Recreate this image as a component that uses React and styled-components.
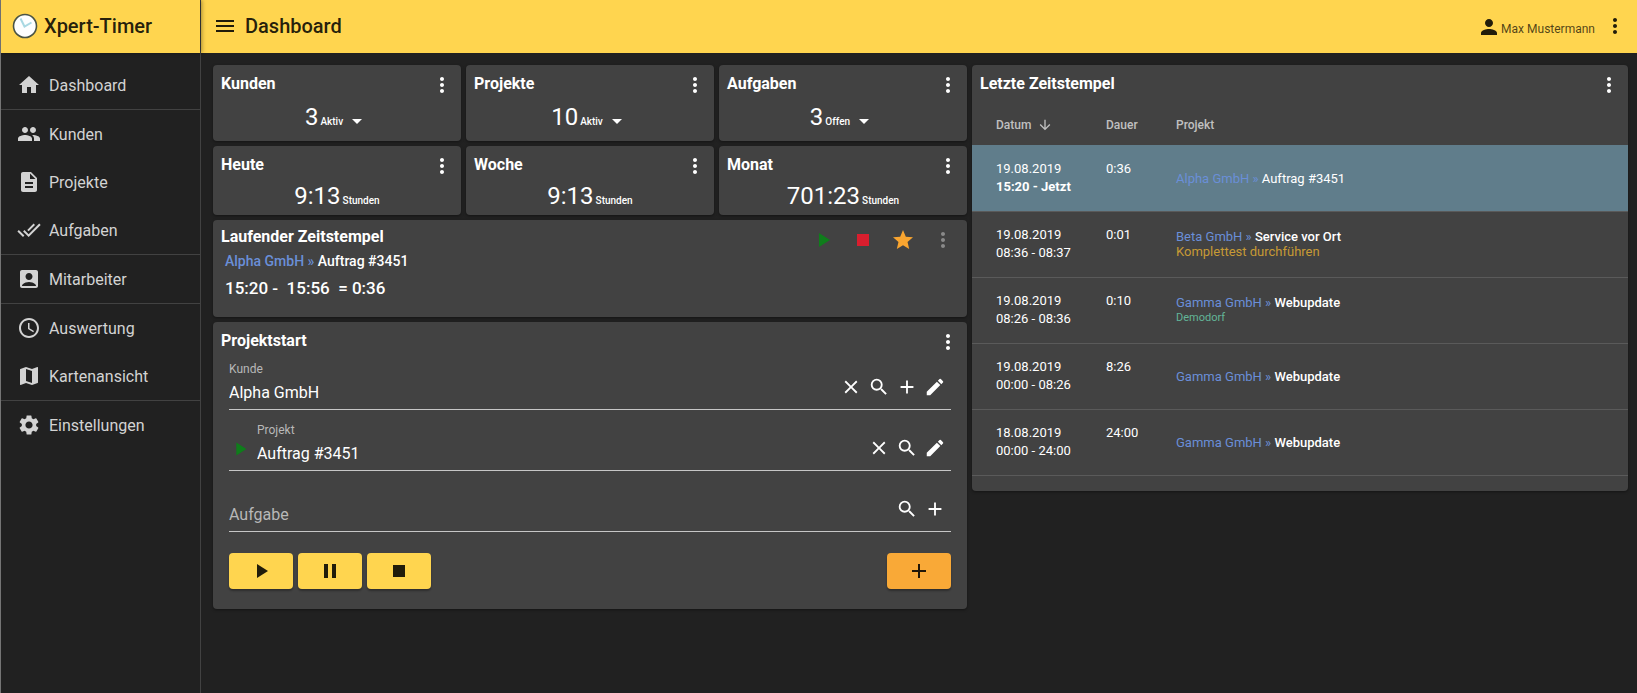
import React from 'react';
import styled, { createGlobalStyle } from 'styled-components';
import {
    MdHome,
    MdPeople,
    MdDescription,
    MdDoneAll,
    MdAccountBox,
    MdAccessTime,
    MdMap,
    MdSettings,
    MdMenu,
    MdPerson,
    MdMoreVert,
    MdArrowDropDown,
    MdArrowDownward,
    MdPlayArrow,
    MdPause,
    MdStop,
    MdStar,
    MdClose,
    MdSearch,
    MdAdd,
    MdEdit,
} from 'react-icons/md';

const GlobalStyle = createGlobalStyle`
    * {
        box-sizing: border-box;
    }
    body {
        margin: 0;
        background: #212121;
        color: white;
        font-family: Roboto, sans-serif;
        font-size: 13px;
    }
    button, input {
        font-family: inherit;
    }
    svg {
        display: block;
        flex-shrink: 0;
    }
`;

const Page = styled.div`
    display: grid;
    grid-template-columns: 201px minmax(0, 1fr);
    min-height: 100vh;
`;

/* Sidebar */

const Sidebar = styled.aside`
    border-left: 1px solid #757575;
    border-right: 1px solid #424242;
    z-index: 1;
`;

const Brand = styled.div`
    height: 53px;
    display: flex;
    align-items: center;
    gap: 6px;
    padding: 0 0 1px 11px;
    background: #ffd54f;
    color: rgba(0, 0, 0, 0.87);
    font-size: 20px;
    font-weight: 500;
    box-shadow: 2px 0 4px rgba(0, 0, 0, 0.35);
`;

const Nav = styled.nav`
    padding-top: 8px;
`;

const NavGroup = styled.div`
    & + & {
        border-top: 1px solid #424242;
    }
`;

const NavItem = styled.a`
    display: flex;
    align-items: center;
    gap: 8px;
    height: 48px;
    padding-left: 16px;
    color: #d3d3d3;
    font-size: 16px;
    text-decoration: none;
`;

/* Top bar */

const Toolbar = styled.header`
    height: 53px;
    display: flex;
    align-items: center;
    gap: 8px;
    padding: 0 10px 1px 12px;
    background: #ffd54f;
    color: rgba(0, 0, 0, 0.87);
`;

const PageTitle = styled.h1`
    flex: 1;
    margin: 0;
    font-size: 20px;
    font-weight: 500;
`;

const User = styled.span`
    display: flex;
    align-items: center;
    padding-top: 2px;
    font-size: 12px;

    span {
        padding-top: 4px;
        opacity: 0.8;
    }
`;

const IconButton = styled.button`
    display: flex;
    align-items: center;
    justify-content: center;
    width: ${(props) => props.$size || 24}px;
    height: 24px;
    padding: 0;
    border: none;
    background: none;
    color: ${(props) => props.$color || 'inherit'};
    cursor: pointer;
`;

/* Cards */

const Main = styled.main`
    display: grid;
    grid-template-columns: minmax(0, 754fr) minmax(0, 656fr);
    align-items: start;
    gap: 5px;
    padding: 12px 9px 12px 12px;
`;

const Column = styled.div`
    display: flex;
    flex-direction: column;
    gap: 5px;
`;

const StatGrid = styled.div`
    display: grid;
    grid-template-columns: repeat(3, minmax(0, 1fr));
    gap: 5px;
`;

const Card = styled.section`
    background: #424242;
    border-radius: 4px;
    box-shadow: 0 1px 3px rgba(0, 0, 0, 0.4);
`;

const CardHead = styled.div`
    display: flex;
    align-items: flex-start;
    justify-content: space-between;
    padding: 8px 7px 0 8px;
`;

const CardTitle = styled.h2`
    margin: 0;
    font-size: 16px;
    line-height: 22px;
    font-weight: 700;
`;

const StatCard = styled(Card)`
    padding-bottom: ${(props) => (props.$tall ? 8 : 3)}px;
`;

const Stat = styled.div`
    display: flex;
    align-items: baseline;
    justify-content: center;
    gap: 2px;
    height: 30px;
    margin-top: ${(props) => (props.$tall ? 6 : 4)}px;
    font-size: 24px;
    line-height: 28px;
`;

const Unit = styled.span`
    font-size: 10px;
    font-weight: 500;
`;

const Dropdown = styled(IconButton)`
    align-self: center;
    margin-top: 6px;
`;

const RunningCard = styled(Card)`
    min-height: 97px;
    padding: 6px 12px 12px 8px;
    display: flex;
    align-items: flex-start;
    justify-content: space-between;
`;

const RunningInfo = styled.div`
    p {
        margin: 3px 0 0 4px;
        font-size: 14px;
        line-height: 20px;
        font-weight: 500;
    }
    p + p {
        margin-top: 7px;
        font-size: 17px;
        white-space: pre;
    }
`;

const RunningActions = styled.div`
    display: flex;
    gap: 16px;
    padding-top: 2px;
`;

const Customer = styled.span`
    color: #6a8fd8;
`;

/* Project form */

const Form = styled.form`
    padding: 0 16px 20px;
`;

const Field = styled.div`
    display: flex;
    align-items: center;
    height: 61px;
    border-bottom: 1px solid #c6c6c6;

    &:first-child {
        height: 56px;
    }
`;

const FieldText = styled.div`
    flex: 1;
    align-self: flex-end;
    display: flex;
    flex-direction: column;
    padding-bottom: 7px;
    gap: 5px;
`;

const Label = styled.label`
    font-size: 12px;
    line-height: 16px;
    color: #b8b8b8;
`;

const Input = styled.input`
    width: 100%;
    height: 20px;
    padding: 0;
    border: none;
    outline: none;
    background: none;
    color: white;
    font-size: 16px;

    &::placeholder {
        color: #b8b8b8;
        opacity: 1;
    }
`;

const FieldPrefix = styled.span`
    align-self: flex-end;
    padding: 0 6px 10px 0;
    color: #0f7d1b;
`;

const FieldActions = styled.div`
    align-self: flex-end;
    display: flex;
    padding: 0 2px 10px 0;
`;

const FormButtons = styled.div`
    display: flex;
    gap: 5px;
    padding-top: 21px;
`;

const ActionButton = styled.button`
    display: flex;
    align-items: center;
    justify-content: center;
    width: 64px;
    height: 36px;
    padding: 0;
    border: none;
    border-radius: 4px;
    background: ${(props) => (props.$accent ? '#f9a937' : '#ffd54f')};
    color: rgba(0, 0, 0, 0.87);
    box-shadow: 0 2px 2px rgba(0, 0, 0, 0.3);
    margin-left: ${(props) => (props.$accent ? 'auto' : '0')};
    cursor: pointer;
`;

/* Timestamp table */

const TableCard = styled(Card)`
    padding-bottom: 15px;
`;

const Table = styled.table`
    width: 100%;
    border-collapse: collapse;
    table-layout: fixed;
    margin-top: 8px;

    th {
        height: 40px;
        padding: 0;
        text-align: left;
        font-size: 12px;
        font-weight: 500;
        color: #c0c0c0;
    }
    td {
        height: 66px;
        padding: 0;
        line-height: 18px;
    }
    th:first-child, td:first-child {
        width: 134px;
        padding-left: 24px;
    }
    th:nth-child(2), td:nth-child(2) {
        width: 70px;
    }
`;

const Row = styled.tr`
    background: ${(props) => (props.$active ? '#607d8b' : 'transparent')};
    border-top: 1px solid ${(props) => (props.$active ? '#607d8b' : '#5a5a5a')};
    border-bottom: 1px solid #5a5a5a;
`;

const SortLabel = styled.span`
    display: flex;
    align-items: center;
    gap: 6px;
`;

const Duration = styled.div`
    display: flex;
    gap: 7px;
    height: 36px;
`;

const Project = styled.div`
    line-height: 15px;
    font-weight: ${(props) => (props.$active ? 400 : 500)};

    ${Customer} {
        font-weight: 400;
    }
`;

const Task = styled.div`
    color: #c79a35;
    font-weight: 400;
`;

const Place = styled.div`
    color: #63b598;
    font-size: 11px;
    font-weight: 400;
`;

const navGroups = [
    [{ label: 'Dashboard', icon: MdHome }],
    [
        { label: 'Kunden', icon: MdPeople },
        { label: 'Projekte', icon: MdDescription },
        { label: 'Aufgaben', icon: MdDoneAll },
    ],
    [{ label: 'Mitarbeiter', icon: MdAccountBox }],
    [
        { label: 'Auswertung', icon: MdAccessTime },
        { label: 'Kartenansicht', icon: MdMap },
    ],
    [{ label: 'Einstellungen', icon: MdSettings }],
];

const counts = [
    { title: 'Kunden', value: '3', unit: 'Aktiv' },
    { title: 'Projekte', value: '10', unit: 'Aktiv' },
    { title: 'Aufgaben', value: '3', unit: 'Offen' },
];

const hours = [
    { title: 'Heute', value: '9:13' },
    { title: 'Woche', value: '9:13' },
    { title: 'Monat', value: '701:23' },
];

const timestamps = [
    { date: '19.08.2019', time: '15:20 - Jetzt', duration: '0:36', customer: 'Alpha GmbH', project: 'Auftrag #3451', active: true },
    { date: '19.08.2019', time: '08:36 - 08:37', duration: '0:01', customer: 'Beta GmbH', project: 'Service vor Ort', task: 'Komplettest durchführen' },
    { date: '19.08.2019', time: '08:26 - 08:36', duration: '0:10', customer: 'Gamma GmbH', project: 'Webupdate', place: 'Demodorf' },
    { date: '19.08.2019', time: '00:00 - 08:26', duration: '8:26', customer: 'Gamma GmbH', project: 'Webupdate' },
    { date: '18.08.2019', time: '00:00 - 24:00', duration: '24:00', customer: 'Gamma GmbH', project: 'Webupdate' },
];

const ClockLogo = () => (
    <svg width="26" height="26" viewBox="0 0 26 26">
        <circle cx="13" cy="13" r="11.5" fill="#fdfefe" stroke="#4a5445" strokeWidth="1.6" />
        <path d="M8.5 5.5 12.5 13.5l7-4" fill="none" stroke="#a9d8e2" strokeWidth="2" />
    </svg>
);

const SignalIcon = () => (
    <svg width="16" height="18" viewBox="0 0 16 18">
        <path
            d="M3.5 4.5q-3 4.500 9M12.500 4.500q3 4.500 0 9M5.500 12V6l5 6V6"
            fill="none"
            stroke="#74747c"
            strokeOpacity="0.75"
        />
    </svg>
);

const CardHeader = ({ title }) => (
    <CardHead>
        <CardTitle>{title}</CardTitle>
        <IconButton type="button" aria-label={`${title} Menü`}>
            <MdMoreVert size={24} />
        </IconButton>
    </CardHead>
);

const App = () => {
    return (
        <>
            <GlobalStyle />
            <Page>
                <Sidebar>
                    <Brand>
                        <ClockLogo />
                        Xpert-Timer
                    </Brand>
                    <Nav>
                        {navGroups.map((group) => (
                            <NavGroup key={group[0].label}>
                                {group.map(({ label, icon: Icon }) => (
                                    <NavItem href="#" key={label}>
                                        <Icon size={24} />
                                        {label}
                                    </NavItem>
                                ))}
                            </NavGroup>
                        ))}
                    </Nav>
                </Sidebar>
                <div>
                    <Toolbar>
                        <IconButton type="button" aria-label="Navigation">
                            <MdMenu size={24} />
                        </IconButton>
                        <PageTitle>Dashboard</PageTitle>
                        <User>
                            <MdPerson size={24} />
                            <span>Max Mustermann</span>
                        </User>
                        <IconButton type="button" aria-label="Mehr">
                            <MdMoreVert size={24} />
                        </IconButton>
                    </Toolbar>
                    <Main>
                        <Column>
                            <StatGrid>
                                {counts.map((item) => (
                                    <StatCard key={item.title} $tall>
                                        <CardHeader title={item.title} />
                                        <Stat $tall>
                                            {item.value}
                                            <Unit>{item.unit}</Unit>
                                            <Dropdown type="button" aria-label={`${item.title} Filter`}>
                                                <MdArrowDropDown size={24} />
                                            </Dropdown>
                                        </Stat>
                                    </StatCard>
                                ))}
                                {hours.map((item) => (
                                    <StatCard key={item.title}>
                                        <CardHeader title={item.title} />
                                        <Stat>
                                            {item.value}
                                            <Unit>Stunden</Unit>
                                        </Stat>
                                    </StatCard>
                                ))}
                            </StatGrid>
                            <RunningCard>
                                <RunningInfo>
                                    <CardTitle>Laufender Zeitstempel</CardTitle>
                                    <p>
                                        <Customer>Alpha GmbH »</Customer> Auftrag #3451
                                    </p>
                                    <p>{'15:20 -  15:56  = 0:36'}</p>
                                </RunningInfo>
                                <RunningActions>
                                    <IconButton type="button" aria-label="Start" $color="#0f7d1b">
                                        <MdPlayArrow size={24} />
                                    </IconButton>
                                    <IconButton type="button" aria-label="Stopp" $color="#d91e2e">
                                        <MdStop size={24} />
                                    </IconButton>
                                    <IconButton type="button" aria-label="Favorit" $color="#f9a530">
                                        <MdStar size={24} />
                                    </IconButton>
                                    <IconButton type="button" aria-label="Mehr" $color="#8a8a8a">
                                        <MdMoreVert size={24} />
                                    </IconButton>
                                </RunningActions>
                            </RunningCard>
                            <Card>
                                <CardHeader title="Projektstart" />
                                <Form>
                                    <Field>
                                        <FieldText>
                                            <Label htmlFor="kunde">Kunde</Label>
                                            <Input id="kunde" defaultValue="Alpha GmbH" />
                                        </FieldText>
                                        <FieldActions>
                                            <IconButton type="button" $size={28} aria-label="Leeren"><MdClose size={22} /></IconButton>
                                            <IconButton type="button" $size={28} aria-label="Suchen"><MdSearch size={22} /></IconButton>
                                            <IconButton type="button" $size={28} aria-label="Neu"><MdAdd size={22} /></IconButton>
                                            <IconButton type="button" $size={28} aria-label="Bearbeiten"><MdEdit size={22} /></IconButton>
                                        </FieldActions>
                                    </Field>
                                    <Field>
                                        <FieldPrefix>
                                            <MdPlayArrow size={22} />
                                        </FieldPrefix>
                                        <FieldText>
                                            <Label htmlFor="projekt">Projekt</Label>
                                            <Input id="projekt" defaultValue="Auftrag #3451" />
                                        </FieldText>
                                        <FieldActions>
                                            <IconButton type="button" $size={28} aria-label="Leeren"><MdClose size={22} /></IconButton>
                                            <IconButton type="button" $size={28} aria-label="Suchen"><MdSearch size={22} /></IconButton>
                                            <IconButton type="button" $size={28} aria-label="Bearbeiten"><MdEdit size={22} /></IconButton>
                                        </FieldActions>
                                    </Field>
                                    <Field>
                                        <FieldText>
                                            <Input aria-label="Aufgabe" placeholder="Aufgabe" />
                                        </FieldText>
                                        <FieldActions>
                                            <IconButton type="button" $size={28} aria-label="Suchen"><MdSearch size={22} /></IconButton>
                                            <IconButton type="button" $size={28} aria-label="Neu"><MdAdd size={22} /></IconButton>
                                        </FieldActions>
                                    </Field>
                                    <FormButtons>
                                        <ActionButton type="button" aria-label="Start"><MdPlayArrow size={24} /></ActionButton>
                                        <ActionButton type="button" aria-label="Pause"><MdPause size={24} /></ActionButton>
                                        <ActionButton type="button" aria-label="Stopp"><MdStop size={24} /></ActionButton>
                                        <ActionButton type="button" aria-label="Hinzufügen" $accent><MdAdd size={24} /></ActionButton>
                                    </FormButtons>
                                </Form>
                            </Card>
                        </Column>
                        <TableCard>
                            <CardHeader title="Letzte Zeitstempel" />
                            <Table>
                                <thead>
                                    <tr>
                                        <th>
                                            <SortLabel>
                                                Datum
                                                <MdArrowDownward size={16} />
                                            </SortLabel>
                                        </th>
                                        <th>Dauer</th>
                                        <th>Projekt</th>
                                    </tr>
                                </thead>
                                <tbody>
                                    {timestamps.map((entry) => (
                                        <Row key={entry.time} $active={entry.active}>
                                            <td>
                                                {entry.date}
                                                <br />
                                                {entry.active ? <b>{entry.time}</b> : entry.time}
                                            </td>
                                            <td>
                                                <Duration>
                                                    {entry.duration}
                                                    {entry.active && <SignalIcon />}
                                                </Duration>
                                            </td>
                                            <td>
                                                <Project $active={entry.active}>
                                                    <Customer>{entry.customer} »</Customer> {entry.project}
                                                    {entry.task && <Task>{entry.task}</Task>}
                                                    {entry.place && <Place>{entry.place}</Place>}
                                                </Project>
                                            </td>
                                        </Row>
                                    ))}
                                </tbody>
                            </Table>
                        </TableCard>
                    </Main>
                </div>
            </Page>
        </>
    );
};

export default App;
